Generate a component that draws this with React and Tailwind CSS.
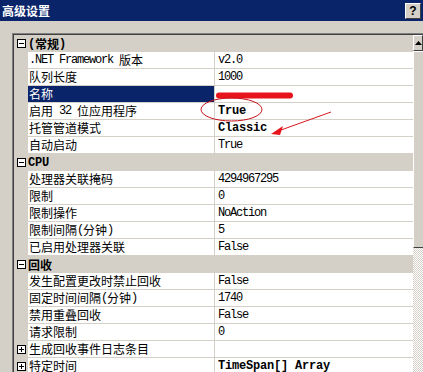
import React from 'react'

const SECTIONS = [
  {
    title: '(常规)',
    rows: [
      { label: '.NET Framework 版本', value: 'v2.0' },
      { label: '队列长度', value: '1000' },
      { label: '名称', value: '', selected: true },
      { label: '启用 32 位应用程序', value: 'True', bold: true },
      { label: '托管管道模式', value: 'Classic', bold: true },
      { label: '自动启动', value: 'True' },
    ],
  },
  {
    title: 'CPU',
    rows: [
      { label: '处理器关联掩码', value: '4294967295' },
      { label: '限制', value: '0' },
      { label: '限制操作', value: 'NoAction' },
      { label: '限制间隔(分钟)', value: '5' },
      { label: '已启用处理器关联', value: 'False' },
    ],
  },
  {
    title: '回收',
    rows: [
      { label: '发生配置更改时禁止回收', value: 'False' },
      { label: '固定时间间隔(分钟)', value: '1740' },
      { label: '禁用重叠回收', value: 'False' },
      { label: '请求限制', value: '0' },
      { label: '生成回收事件日志条目', value: '', expand: true },
      { label: '特定时间', value: 'TimeSpan[] Array', bold: true, expand: true },
    ],
  },
]

// latin runs are drawn in a narrow mono face, like SimSun's half-width glyphs
const Mixed = ({ text, bold }) =>
  text.split(/([\x00-\x7F]+)/).filter(Boolean).map((part, i) =>
    /^[\x00-\x7F]+$/.test(part) ? (
      <span
        key={i}
        className={`whitespace-pre font-['Liberation_Mono',monospace] ${bold ? 'tracking-[-0.2px]' : 'tracking-[-1.2px]'}`}
      >
        {part}
      </span>
    ) : (
      <span key={i}>{part}</span>
    ),
  )

const Expander = ({ open }) => (
  <svg width="9" height="9" viewBox="0 0 9 9" className="block">
    <rect x="0.5" y="0.5" width="8" height="8" fill="#fff" stroke="#000" />
    <path d="M2 4.5h5" stroke="#000" />
    {!open && <path d="M4.5 2v5" stroke="#000" />}
  </svg>
)

const Category = ({ title }) => (
  <div className="flex h-[17px]">
    <div className="flex w-[14px] items-center justify-center pl-[1px]">
      <Expander open />
    </div>
    <div className="flex flex-1 items-center bg-[#d4d0c8] pl-[0px] font-bold text-black">
      <Mixed text={title} bold />
    </div>
  </div>
)

const Row = ({ row }) => (
  <div className="flex h-[17px]">
    <div className="flex w-[14px] items-center justify-center pl-[1px]">
      {row.expand && <Expander />}
    </div>
    <div
      className={`flex w-[186px] items-center border-b border-[#d4d0c8] pl-[1px] ${
        row.selected ? 'bg-[#0a246a] text-white' : 'bg-white text-black'
      }`}
    >
      <Mixed text={row.label} />
    </div>
    <div className="w-px bg-[#d4d0c8]" />
    <div
      className={`flex w-[198px] items-center border-b border-[#d4d0c8] bg-white pl-[3px] text-black ${
        row.bold ? 'font-bold' : ''
      }`}
    >
      <Mixed text={row.value} bold={row.bold} />
    </div>
  </div>
)

const ScrollBar = () => (
  <div className="flex flex-1 flex-col">
    <div className="flex h-[16px] items-center justify-center border-t border-l border-white border-r border-b border-r-[#404040] border-b-[#404040] bg-[#d4d0c8]">
      <svg width="7" height="4" viewBox="0 0 7 4">
        <path d="M3.5 0L7 4H0z" fill="#000" />
      </svg>
    </div>
    <div className="h-[197px] border-t border-l border-white border-b border-b-[#404040] bg-[#d4d0c8]" />
    <div className="flex-1 bg-[repeating-conic-gradient(#d4d0c8_0_25%,#ffffff_0_50%)] bg-[length:2px_2px]" />
  </div>
)

export default function App() {
  return (
    <div className="relative h-[372px] w-[423px] overflow-hidden bg-[#d4d0c8] font-['Noto_Sans_CJK_SC',sans-serif] text-[12px] leading-none">
      <div className="flex h-[21px] items-center justify-between bg-[#0a246a] pl-[2px] pr-[2px]">
        <span className="font-bold text-white">高级设置</span>
        <div className="flex h-[16px] w-[16px] items-center justify-center border-t border-l border-white border-r border-b border-r-[#404040] border-b-[#404040] bg-[#d4d0c8] font-['Liberation_Sans',sans-serif] text-[12px] font-bold text-black">
          ?
        </div>
      </div>

      <div className="pl-[12px] pt-[12px]">
        <div className="border-t border-l border-[#808080]">
          <div className="flex h-[400px] border-t border-l border-[#404040]">
            <div className="flex w-[399px] flex-col">
              {SECTIONS.map((section) => (
                <React.Fragment key={section.title}>
                  <Category title={section.title} />
                  {section.rows.map((row) => (
                    <Row key={row.label} row={row} />
                  ))}
                </React.Fragment>
              ))}
            </div>
            <ScrollBar />
          </div>
        </div>
      </div>

      <svg className="pointer-events-none absolute left-0 top-0" width="423" height="372" viewBox="0 0 423 372">
        <path d="M219 95.5H290" stroke="#e8141c" strokeWidth="6" strokeLinecap="round" />
        <ellipse cx="231.5" cy="109.5" rx="30.5" ry="11.5" fill="none" stroke="#c4121a" strokeWidth="1" />
        <path d="M331 112L281 130" stroke="#d81820" strokeWidth="1" />
        <path d="M271 134L283 126L280 135z" fill="#e8141c" />
      </svg>
    </div>
  )
}
